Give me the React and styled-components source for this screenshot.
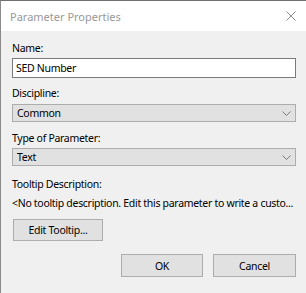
import React from "react";
import styled, { createGlobalStyle } from "styled-components";

const Global = createGlobalStyle`
  html, body { margin: 0; padding: 0; background: #f0f0f0; }
  body { font-family: "Noto Sans", "Open Sans", sans-serif; }
  * { box-sizing: border-box; }
`;

const Window = styled.div`
  width: 306px;
  height: 293px;
  background: #f0f0f0;
  border-left: 1px solid #8a8a8a;
  border-top: 1px solid #6f6f6f;
  display: flex;
  flex-direction: column;
  overflow: hidden;
`;

const TitleBar = styled.div`
  height: 30px;
  background: #ffffff;
  display: flex;
  align-items: center;
  justify-content: space-between;
  padding: 0 10px 0 9px;
  flex-shrink: 0;
`;

const Title = styled.span`
  font-family: "Noto Sans", sans-serif;
  font-size: 11px;
  color: #999999;
`;

const CloseIcon = styled.svg`
  width: 10px;
  height: 10px;
`;

const Body = styled.div`
  display: flex;
  flex-direction: column;
  padding: 9px 10px 0 11px;
  font-size: 10.5px;
  letter-spacing: -0.3px;
  color: #000;
`;

const Label = styled.div`
  height: 16px;
  line-height: 16px;
  margin-top: ${(p) => p.$mt || 0}px;
  white-space: nowrap;
`;

const Input = styled.div`
  margin-top: 2px;
  height: 20px;
  border: 1px solid #7a7a7a;
  background: #fff;
  padding: 0 3px;
  line-height: 18px;
`;

const Select = styled.div`
  margin-top: ${(p) => p.$mt || 4}px;
  height: 18px;
  border: 1px solid #adadad;
  background: #e1e1e1;
  display: flex;
  align-items: center;
  justify-content: space-between;
  padding: 0 4px;
`;

const Chevron = styled.svg`
  width: 9px;
  height: 5px;
`;

const Button = styled.div`
  width: ${(p) => p.$w}px;
  height: ${(p) => p.$h}px;
  border: 1px solid #adadad;
  background: #e1e1e1;
  display: flex;
  align-items: center;
  justify-content: center;
`;

const ButtonRow = styled.div`
  display: flex;
  justify-content: flex-end;
  gap: 10px;
  margin-top: 13px;
`;

const EditRow = styled.div`
  margin-top: 8px;
  padding-left: 1px;
`;

const ChevronDown = () => (
  <Chevron viewBox="0 0 9 5">
    <path d="M0.5 0.5 L4.5 4.5 L8.5 0.5" stroke="#7a7a7a" strokeWidth="1" fill="none" />
  </Chevron>
);

export default function App() {
  return (
    <>
      <Global />
      <Window>
        <TitleBar>
          <Title>Parameter Properties</Title>
          <CloseIcon viewBox="0 0 10 10">
            <path d="M0.5 0.5 L9.5 9.5 M9.5 0.5 L0.5 9.5" stroke="#8a8a8a" strokeWidth="1" fill="none" />
          </CloseIcon>
        </TitleBar>
        <Body>
          <Label>Name:</Label>
          <Input>SED Number</Input>
          <Label $mt={7}>Discipline:</Label>
          <Select $mt={3}>
            <span>Common</span>
            <ChevronDown />
          </Select>
          <Label $mt={8}>Type of Parameter:</Label>
          <Select $mt={2}>
            <span>Text</span>
            <ChevronDown />
          </Select>
          <Label $mt={10}>Tooltip Description:</Label>
          <Label $mt={3}>&lt;No tooltip description. Edit this parameter to write a custo...</Label>
          <EditRow>
            <Button $w={90} $h={22}>Edit Tooltip...</Button>
          </EditRow>
          <ButtonRow>
            <Button $w={82} $h={23}>OK</Button>
            <Button $w={83} $h={23}>Cancel</Button>
          </ButtonRow>
        </Body>
      </Window>
    </>
  );
}
